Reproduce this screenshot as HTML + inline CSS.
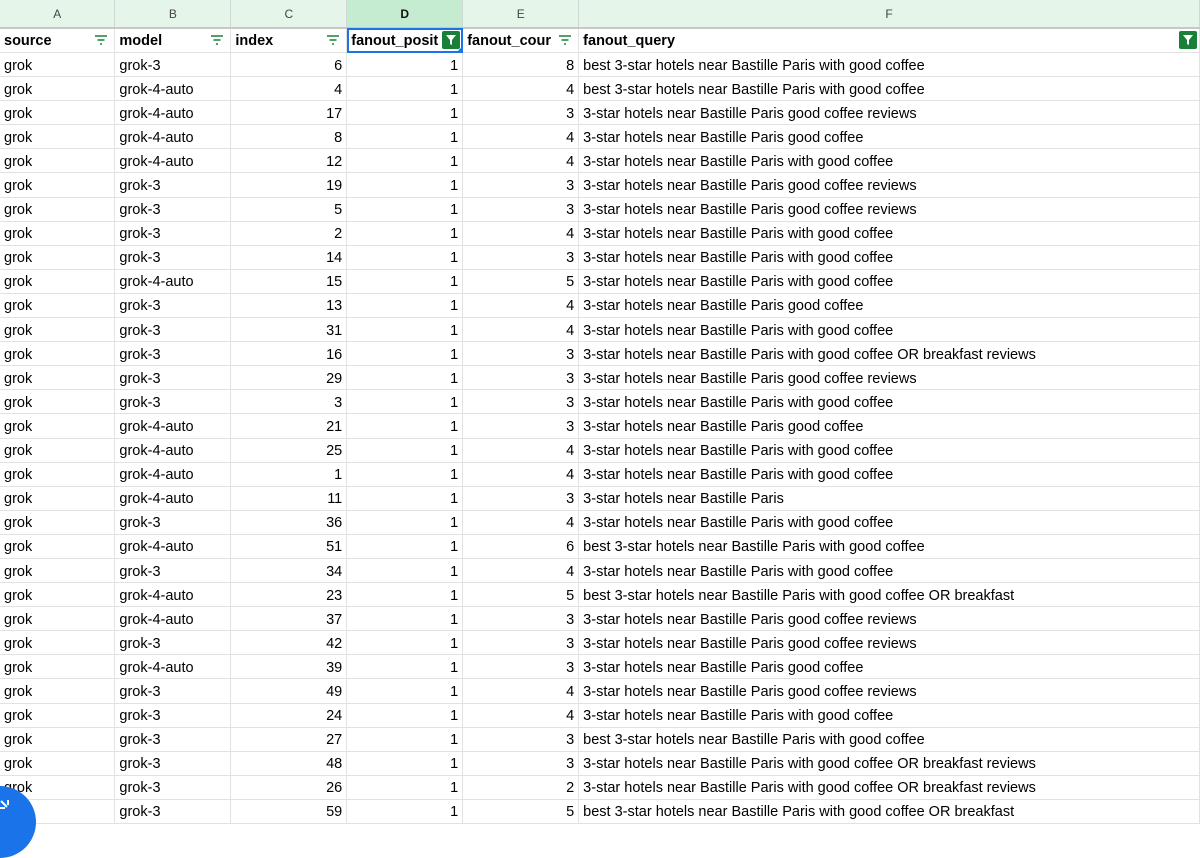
<!DOCTYPE html><html><head><style>
body{margin:0;width:1200px;height:822px;overflow:hidden;background:#fff;font-family:"Liberation Sans",Arial,sans-serif;font-size:14.5px;color:#000;position:relative}
table{border-collapse:collapse;table-layout:fixed;position:absolute;left:0;top:0}
td{border-right:1px solid #e2e2e2;border-bottom:1px solid #e2e2e2;height:23.1px;padding:0 4px;white-space:nowrap;overflow:hidden;position:relative}
tr.h td{height:27px;background:#e6f5ea;color:#444;font-size:12px;text-align:center;border-right:1px solid #cfd8d2;border-bottom:2px solid #c8c8c8}
tr.h td.sel{background:#c5ebd0;color:#111;font-weight:bold}
tr.f td{font-weight:bold;height:23px}
tr.d td{padding-top:2px;height:21.1px}
.r{text-align:right}
.fi{position:absolute;right:6px;top:5px;width:14px;height:12px}
.gf{position:absolute;right:2px;top:2px;width:18px;height:18px;background:#188038;border-radius:2px}
</style></head><body>
<table>
<colgroup><col style="width:115px"><col style="width:116px"><col style="width:116px"><col style="width:116px"><col style="width:116px"><col style="width:621px"></colgroup>
<tr class="h"><td>A</td><td>B</td><td>C</td><td class="sel">D</td><td>E</td><td>F</td></tr>
<tr class="f">
<td>source<svg class="fi" viewBox="0 0 14 12"><path d="M1 2h12M3.5 6h7M6 10h2" stroke="#188038" stroke-width="1.6"/></svg></td>
<td>model<svg class="fi" viewBox="0 0 14 12"><path d="M1 2h12M3.5 6h7M6 10h2" stroke="#188038" stroke-width="1.6"/></svg></td>
<td>index<svg class="fi" viewBox="0 0 14 12"><path d="M1 2h12M3.5 6h7M6 10h2" stroke="#188038" stroke-width="1.6"/></svg></td>
<td style="outline:2px solid #1a73e8;outline-offset:-2px">fanout_posit<span class="gf"><svg viewBox="0 0 18 18" width="18" height="18"><path d="M4 4h10l-4 5v5l-2-1v-4z" fill="#fff"/></svg></span><span style="position:absolute;right:-5px;bottom:-5px;width:9px;height:9px;border-radius:50%;background:#1a73e8;z-index:2"></span></td>
<td>fanout_cour<svg class="fi" viewBox="0 0 14 12"><path d="M1 2h12M3.5 6h7M6 10h2" stroke="#188038" stroke-width="1.6"/></svg></td>
<td>fanout_query<span class="gf"><svg viewBox="0 0 18 18" width="18" height="18"><path d="M4 4h10l-4 5v5l-2-1v-4z" fill="#fff"/></svg></span></td>
</tr>
<tbody id="b"></tbody>
</table>
<div style="position:absolute;left:-36px;top:786px;width:72px;height:72px;border-radius:50%;background:#1a73e8"><svg style="position:absolute;left:36px;top:14px" width="16" height="16" viewBox="0 0 16 16"><path d="M1 1l6 6M8 0v5M0 8h5" stroke="#fff" stroke-width="2"/></svg></div>
<script>
var d=[["grok-3",6,8,"best 3-star hotels near Bastille Paris with good coffee"],["grok-4-auto",4,4,"best 3-star hotels near Bastille Paris with good coffee"],["grok-4-auto",17,3,"3-star hotels near Bastille Paris good coffee reviews"],["grok-4-auto",8,4,"3-star hotels near Bastille Paris good coffee"],["grok-4-auto",12,4,"3-star hotels near Bastille Paris with good coffee"],["grok-3",19,3,"3-star hotels near Bastille Paris good coffee reviews"],["grok-3",5,3,"3-star hotels near Bastille Paris good coffee reviews"],["grok-3",2,4,"3-star hotels near Bastille Paris with good coffee"],["grok-3",14,3,"3-star hotels near Bastille Paris with good coffee"],["grok-4-auto",15,5,"3-star hotels near Bastille Paris with good coffee"],["grok-3",13,4,"3-star hotels near Bastille Paris good coffee"],["grok-3",31,4,"3-star hotels near Bastille Paris with good coffee"],["grok-3",16,3,"3-star hotels near Bastille Paris with good coffee OR breakfast reviews"],["grok-3",29,3,"3-star hotels near Bastille Paris good coffee reviews"],["grok-3",3,3,"3-star hotels near Bastille Paris with good coffee"],["grok-4-auto",21,3,"3-star hotels near Bastille Paris good coffee"],["grok-4-auto",25,4,"3-star hotels near Bastille Paris with good coffee"],["grok-4-auto",1,4,"3-star hotels near Bastille Paris with good coffee"],["grok-4-auto",11,3,"3-star hotels near Bastille Paris"],["grok-3",36,4,"3-star hotels near Bastille Paris with good coffee"],["grok-4-auto",51,6,"best 3-star hotels near Bastille Paris with good coffee"],["grok-3",34,4,"3-star hotels near Bastille Paris with good coffee"],["grok-4-auto",23,5,"best 3-star hotels near Bastille Paris with good coffee OR breakfast"],["grok-4-auto",37,3,"3-star hotels near Bastille Paris good coffee reviews"],["grok-3",42,3,"3-star hotels near Bastille Paris good coffee reviews"],["grok-4-auto",39,3,"3-star hotels near Bastille Paris good coffee"],["grok-3",49,4,"3-star hotels near Bastille Paris good coffee reviews"],["grok-3",24,4,"3-star hotels near Bastille Paris with good coffee"],["grok-3",27,3,"best 3-star hotels near Bastille Paris with good coffee"],["grok-3",48,3,"3-star hotels near Bastille Paris with good coffee OR breakfast reviews"],["grok-3",26,2,"3-star hotels near Bastille Paris with good coffee OR breakfast reviews"],["grok-3",59,5,"best 3-star hotels near Bastille Paris with good coffee OR breakfast"]];
var h="";d.forEach(function(r){h+="<tr class=d><td>grok</td><td>"+r[0]+"</td><td class=r>"+r[1]+"</td><td class=r>1</td><td class=r>"+r[2]+"</td><td>"+r[3]+"</td></tr>"});
document.getElementById("b").innerHTML=h;
</script>
</body></html>
